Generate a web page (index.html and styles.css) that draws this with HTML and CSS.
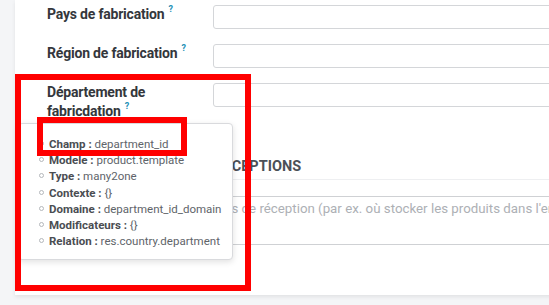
FILE: index.html
```html
<!DOCTYPE html>
<html lang="fr">
<head>
    <meta charset="utf-8">
    <meta name="viewport" content="width=device-width, initial-scale=1.0">
    <title>Article - Inventaire</title>
    <link rel="stylesheet" href="styles.css">
</head>
<body>
    <div class="page">
        <div class="sheet">
            <div class="field-row">
                <label class="field-label">Pays de fabrication<sup class="help">?</sup></label>
                <div class="field-input"></div>
            </div>
            <div class="field-row">
                <label class="field-label">Région de fabrication<sup class="help">?</sup></label>
                <div class="field-input"></div>
            </div>
            <div class="field-row">
                <label class="field-label">Département de fabricdation<sup class="help">?</sup></label>
                <div class="field-input"></div>
            </div>

            <div class="notes">
                <h3 class="separator">Description pour les réceptions</h3>
                <div class="note-field">Cette note est ajoutée aux ordres de réception (par ex. où stocker les produits dans l'entrepôt)</div>
            </div>
        </div>

        <!-- debug tooltip shown on hover of the field label -->
        <div class="tooltip">
            <ul class="tooltip-list">
                <li><b>Champ :</b> department_id</li>
                <li><b>Modele :</b> product.template</li>
                <li><b>Type :</b> many2one</li>
                <li><b>Contexte :</b> {}</li>
                <li><b>Domaine :</b> department_id_domain</li>
                <li><b>Modificateurs :</b> {}</li>
                <li><b>Relation :</b> res.country.department</li>
            </ul>
        </div>

        <div class="mark mark-big"></div>
        <div class="mark mark-small"></div>
    </div>
</body>
</html>
```

FILE: styles.css
```css
body {
    margin: 0;
    background: #f4f5f7;
    font-family: Roboto, 'Liberation Sans', sans-serif;
    overflow: hidden;
}

.page {
    position: relative;
    height: 305px;
}

.sheet {
    margin-left: 15px;
    width: 560px;
    height: 295px;
    background: #fff;
    box-shadow: 0 2px 4px rgba(0, 0, 0, 0.08);
    padding: 5px 0 0 32px;
    box-sizing: border-box;
    overflow: hidden;
}

.field-row {
    display: grid;
    grid-template-columns: 166px 1fr;
    margin-bottom: 15px;
}

.field-label {
    font-size: 14px;
    line-height: 19px;
    font-weight: 700;
    letter-spacing: -0.2px;
    color: #34373c;
    padding-right: 14px;
}

.help {
    color: #1d8fb5;
    font-size: 9px;
    margin-left: 4px;
    vertical-align: 7px;
    line-height: 0;
}

.field-input {
    height: 24px;
    border: 1px solid #d4d6d9;
    border-radius: 3px;
    box-sizing: border-box;
}

.notes {
    margin-top: 36px;
    padding-left: 1px;
}

.separator {
    margin: 0;
    padding-bottom: 2px;
    font-size: 14.5px;
    line-height: 20px;
    font-weight: 700;
    text-transform: uppercase;
    color: #4b5058;
    border-bottom: 1px solid #eeeff1;
}

.note-field {
    margin-top: 16px;
    height: 49px;
    box-sizing: border-box;
    border-top: 1px solid #cfd1d4;
    border-bottom: 1px solid #cfd1d4;
    padding-top: 2px;
    text-indent: -5px;
    font-size: 13.3px;
    line-height: 19px;
    color: #adb0b5;
    white-space: nowrap;
}

.tooltip {
    position: absolute;
    left: 18px;
    top: 123px;
    width: 215px;
    height: 137px;
    box-sizing: border-box;
    background: #fff;
    border: 1px solid #d9dadd;
    border-radius: 4px;
    box-shadow: 0 2px 6px rgba(0, 0, 0, 0.12);
    padding-top: 12px;
}

.tooltip-list {
    list-style: none;
    margin: 0;
    padding: 0 0 0 30px;
    font-size: 11.5px;
    line-height: 16.2px;
    color: #60646a;
    white-space: nowrap;
}

.tooltip-list li::before {
    content: '';
    display: inline-block;
    width: 3px;
    height: 3px;
    border: 1px solid #b4b7bb;
    border-radius: 50%;
    margin: 0 5px 2px -10px;
}

.tooltip-list b {
    color: #4a4d52;
}

.mark {
    position: absolute;
    border: 6px solid #ff0000;
    box-sizing: border-box;
}

.mark-big {
    left: 15px;
    top: 74px;
    width: 236px;
    height: 217px;
}

.mark-small {
    left: 37px;
    top: 117px;
    width: 150px;
    height: 39px;
}
```
